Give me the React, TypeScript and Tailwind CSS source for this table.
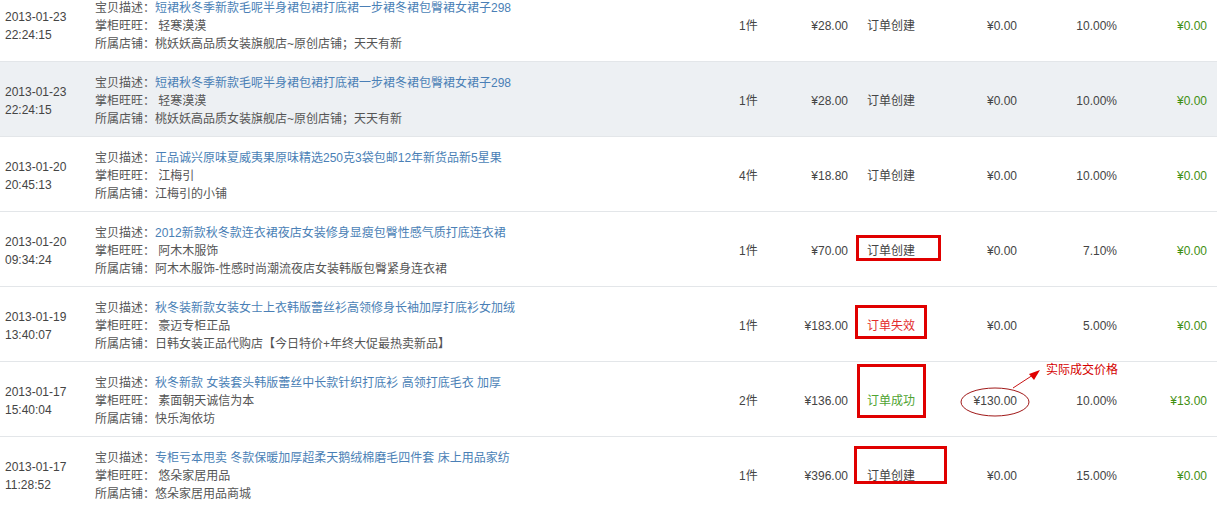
import React from "react";

type Row = {
  date: string;
  time: string;
  desc: string;
  seller: string;
  shop: string;
  qty: string;
  price: string;
  status: string;
  statusColor?: string;
  amount: string;
  rate: string;
  fee: string;
  bg?: string;
  box?: { left: number; top: number; w: number; h: number };
  note?: boolean;
};

const rows: Row[] = [
  {
    date: "2013-01-23",
    time: "22:24:15",
    desc: "短裙秋冬季新款毛呢半身裙包裙打底裙一步裙冬裙包臀裙女裙子298",
    seller: "轻寒漠漠",
    shop: "桃妖妖高品质女装旗舰店~原创店铺；天天有新",
    qty: "1件",
    price: "¥28.00",
    status: "订单创建",
    amount: "¥0.00",
    rate: "10.00%",
    fee: "¥0.00",
  },
  {
    date: "2013-01-23",
    time: "22:24:15",
    desc: "短裙秋冬季新款毛呢半身裙包裙打底裙一步裙冬裙包臀裙女裙子298",
    seller: "轻寒漠漠",
    shop: "桃妖妖高品质女装旗舰店~原创店铺；天天有新",
    qty: "1件",
    price: "¥28.00",
    status: "订单创建",
    amount: "¥0.00",
    rate: "10.00%",
    fee: "¥0.00",
    bg: "gray",
  },
  {
    date: "2013-01-20",
    time: "20:45:13",
    desc: "正品诚兴原味夏威夷果原味精选250克3袋包邮12年新货品新5星果",
    seller: "江梅引",
    shop: "江梅引的小铺",
    qty: "4件",
    price: "¥18.80",
    status: "订单创建",
    amount: "¥0.00",
    rate: "10.00%",
    fee: "¥0.00",
  },
  {
    date: "2013-01-20",
    time: "09:34:24",
    desc: "2012新款秋冬款连衣裙夜店女装修身显瘦包臀性感气质打底连衣裙",
    seller: "阿木木服饰",
    shop: "阿木木服饰-性感时尚潮流夜店女装韩版包臀紧身连衣裙",
    qty: "1件",
    price: "¥70.00",
    status: "订单创建",
    amount: "¥0.00",
    rate: "7.10%",
    fee: "¥0.00",
    box: { left: 856, top: 23, w: 85, h: 26 },
  },
  {
    date: "2013-01-19",
    time: "13:40:07",
    desc: "秋冬装新款女装女士上衣韩版蕾丝衫高领修身长袖加厚打底衫女加绒",
    seller: "豪迈专柜正品",
    shop: "日韩女装正品代购店【今日特价+年终大促最热卖新品】",
    qty: "1件",
    price: "¥183.00",
    status: "订单失效",
    statusColor: "red",
    amount: "¥0.00",
    rate: "5.00%",
    fee: "¥0.00",
    box: { left: 855, top: 18, w: 72, h: 34 },
  },
  {
    date: "2013-01-17",
    time: "15:40:04",
    desc: "秋冬新款 女装套头韩版蕾丝中长款针织打底衫 高领打底毛衣 加厚",
    seller: "素面朝天诚信为本",
    shop: "快乐淘依坊",
    qty: "2件",
    price: "¥136.00",
    status: "订单成功",
    statusColor: "green",
    amount: "¥130.00",
    rate: "10.00%",
    fee: "¥13.00",
    box: { left: 857, top: 2, w: 69, h: 54 },
    note: true,
  },
  {
    date: "2013-01-17",
    time: "11:28:52",
    desc: "专柜亏本甩卖 冬款保暖加厚超柔天鹅绒棉磨毛四件套 床上用品家纺",
    seller: "悠朵家居用品",
    shop: "悠朵家居用品商城",
    qty: "1件",
    price: "¥396.00",
    status: "订单创建",
    amount: "¥0.00",
    rate: "15.00%",
    fee: "¥0.00",
    box: { left: 854, top: 9, w: 93, h: 38 },
  },
];

function RowView({ r }: { r: Row }) {
  const statusCls =
    r.statusColor === "red"
      ? "text-[#e32b2b]"
      : r.statusColor === "green"
      ? "text-[#4fa331]"
      : "text-[#444]";
  return (
    <div
      className={
        "relative flex h-[75px] items-center border-b border-[#e3e6e9] pt-[3px] " +
        (r.bg === "gray" ? "bg-[#edf0f3]" : "bg-white")
      }
    >
      <div className="w-[90px] shrink-0 pl-[5px] leading-[18px] text-[#444]">
        <div>{r.date}</div>
        <div>{r.time}</div>
      </div>
      <div className="w-[644px] shrink-0 pl-[5px] leading-[18px] text-[#555]">
        <div>
          宝贝描述：<span className="text-[#4a7fb6]">{r.desc}</span>
        </div>
        <div>掌柜旺旺： {r.seller}</div>
        <div>所属店铺：{r.shop}</div>
      </div>
      <div className="w-[60px] shrink-0 pl-[5px] text-[#444]">{r.qty}</div>
      <div className="w-[60px] shrink-0 pr-[6px] text-right text-[#444]">{r.price}</div>
      <div className={"w-[90px] shrink-0 pl-[13px] " + statusCls}>{r.status}</div>
      <div className="w-[79px] shrink-0 pr-[6px] text-right text-[#444]">{r.amount}</div>
      <div className="w-[100px] shrink-0 pr-[6px] text-right text-[#444]">{r.rate}</div>
      <div className="w-[90px] shrink-0 pr-[6px] text-right text-[#3f8f12]">{r.fee}</div>

      {r.box && (
        <div
          className="absolute border-[3px] border-[#e00000]"
          style={{ left: r.box.left, top: r.box.top, width: r.box.w, height: r.box.h }}
        />
      )}
      {r.note && (
        <>
          <svg
            className="absolute left-[955px] top-[-1px]"
            width="100"
            height="65"
            viewBox="0 0 100 65"
          >
            <ellipse cx="40" cy="41" rx="34" ry="14" fill="none" stroke="#a01818" strokeWidth="1" />
            <line x1="58" y1="27" x2="78" y2="14" stroke="#c81414" strokeWidth="1" />
            <polygon points="85,9 74,13 79,19" fill="#e00000" />
          </svg>
          <div className="absolute left-[1046px] top-[0px] text-[12px] leading-[16px] text-[#d40000]">
            实际成交价格
          </div>
        </>
      )}
    </div>
  );
}

export default function App() {
  return (
    <div
      className="h-[508px] w-[1217px] overflow-hidden bg-white text-[12px]"
      style={{ fontFamily: '"Liberation Sans", Arial, "Noto Sans CJK SC", sans-serif' }}
    >
      <div className="-mt-[13px]">
        {rows.map((r, i) => (
          <RowView key={i} r={r} />
        ))}
      </div>
    </div>
  );
}
